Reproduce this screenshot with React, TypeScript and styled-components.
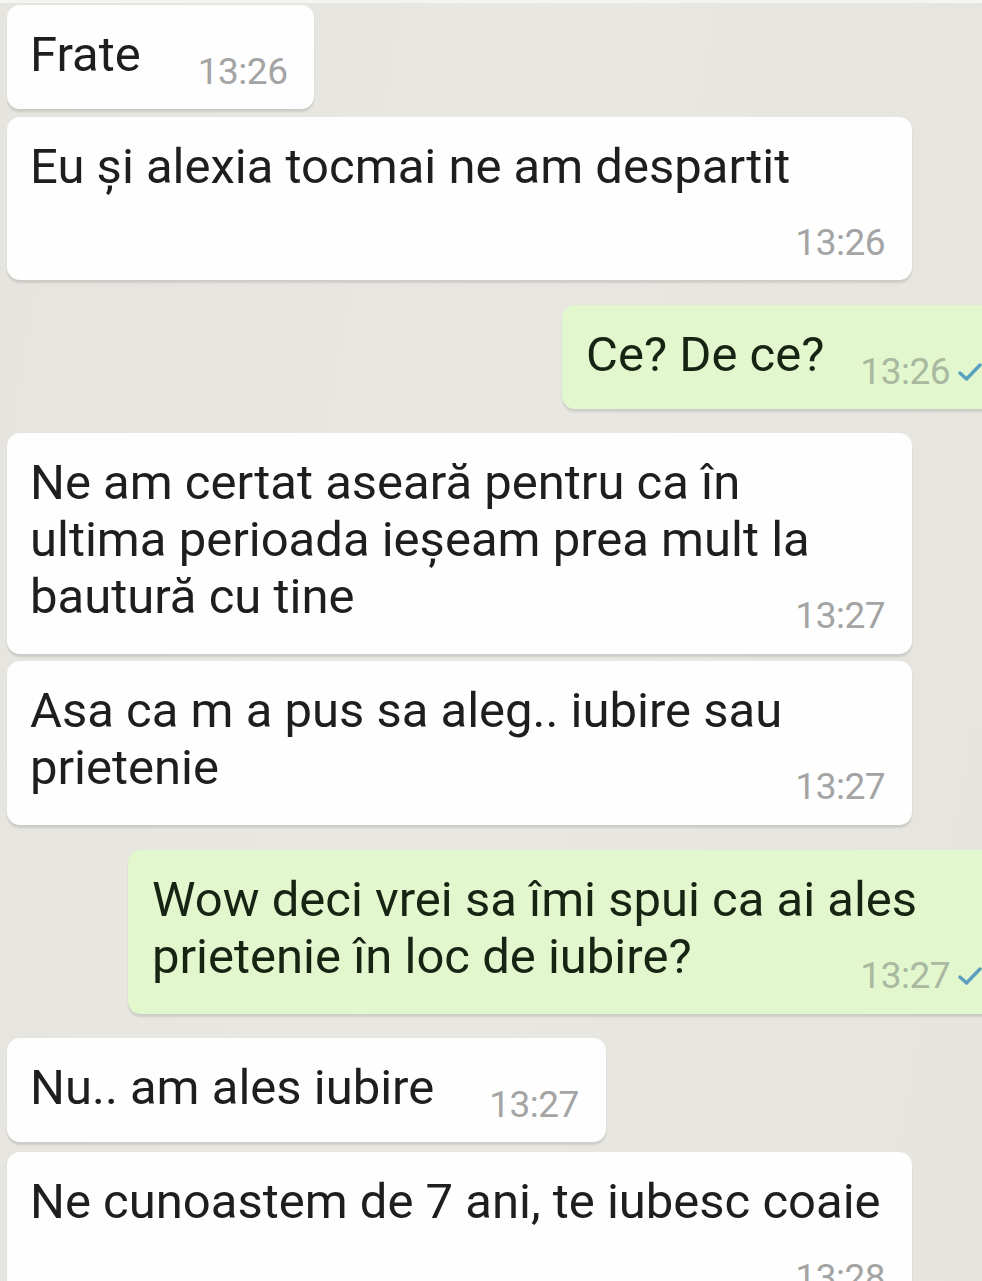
import React from 'react'
import styled, { createGlobalStyle } from 'styled-components'

const GlobalStyle = createGlobalStyle`
    html, body {
        margin: 0;
        padding: 0;
        background: #e7e5e0;
        overflow: hidden;
    }
`

const Page = styled.div`
    width: 982px;
    height: 1281px;
    overflow: hidden;
    background: linear-gradient(100deg, #e6e4df 0%, #e9e7e2 45%, #e6e4de 100%);
    border-top: 3px solid #f4f4f3;
    box-sizing: border-box;
`
const Chat = styled.div`
    width: 1000px;
    display: flex;
    flex-direction: column;
    padding: 2px 5px 0 7px;
    box-sizing: border-box;
    font-family: Roboto, 'Noto Sans', sans-serif;
`
type Layout = 'row' | 'wrap' | 'stack'

const Bubble = styled.div<{ $out?: boolean; $layout: Layout; $gap: number; $width?: number }>`
    align-self: ${p => (p.$out ? 'flex-end' : 'flex-start')};
    margin-top: ${p => p.$gap}px;
    display: flex;
    flex-direction: ${p => (p.$layout === 'row' ? 'row' : 'column')};
    align-items: flex-start;
    box-sizing: border-box;
    width: ${p => (p.$width ? `${p.$width}px` : 'auto')};
    padding: 21px ${p => (p.$out ? 13 : 27)}px ${p => (p.$layout === 'wrap' ? 20 : 19)}px ${p => (p.$out ? 24 : 23)}px;
    background: ${p => (p.$out ? '#e2f7ce' : '#fefefe')};
    border-radius: 13px;
    box-shadow: 0 3px 2px rgba(0, 0, 0, 0.11);
`
const Text = styled.div<{ $out?: boolean }>`
    font-size: 49px;
    line-height: 57px;
    color: ${p => (p.$out ? '#172413' : '#1e1e1e')};
`
const Meta = styled.div<{ $out?: boolean; $layout: Layout; $space?: number }>`
    display: flex;
    align-items: center;
    gap: 8px;
    align-self: ${p => (p.$layout === 'row' ? 'flex-start' : 'flex-end')};
    margin-left: ${p => (p.$layout === 'row' ? p.$space ?? 50 : 0)}px;
    margin-top: ${p => (p.$layout === 'row' ? 28 : p.$layout === 'wrap' ? -27 : 30)}px;
    font-size: 37px;
    line-height: 36px;
    letter-spacing: -0.5px;
    color: ${p => (p.$out ? '#a9b89f' : '#a4a4a4')};
`
const Tick = styled.svg`
    width: 24px;
    height: 20px;
    flex-shrink: 0;
`

interface Message {
    text: string
    time: string
    out?: boolean
    layout: Layout
    gap: number
    width?: number
    space?: number
}

const messages: Message[] = [
    { text: 'Frate', time: '13:26', layout: 'row', gap: 0, space: 57 },
    { text: 'Eu și alexia tocmai ne am despartit', time: '13:26', layout: 'stack', gap: 8, width: 905 },
    { text: 'Ce? De ce?', time: '13:26', out: true, layout: 'row', gap: 25, space: 36 },
    { text: 'Ne am certat aseară pentru ca în ultima perioada ieșeam prea mult la bautură cu tine', time: '13:27', layout: 'wrap', gap: 24, width: 905 },
    { text: 'Asa ca m a pus sa aleg.. iubire sau prietenie', time: '13:27', layout: 'wrap', gap: 7, width: 905 },
    { text: 'Wow deci vrei sa îmi spui ca ai ales prietenie în loc de iubire?', time: '13:27', out: true, layout: 'wrap', gap: 25, width: 867 },
    { text: 'Nu.. am ales iubire', time: '13:27', layout: 'row', gap: 24, space: 55 },
    { text: 'Ne cunoastem de 7 ani, te iubesc coaie', time: '13:28', layout: 'stack', gap: 10, width: 905 },
]

const App: React.FC = () => {
    return (
        <Page>
            <GlobalStyle />
            <Chat>
                {messages.map((m, index) => (
                    <Bubble key={index} $out={m.out} $layout={m.layout} $gap={m.gap} $width={m.width}>
                        <Text $out={m.out}>{m.text}</Text>
                        <Meta $out={m.out} $layout={m.layout} $space={m.space}>
                            <span>{m.time}</span>
                            {m.out && (
                                <Tick viewBox="0 0 24 20">
                                    <path d="M2 11 L8.5 17 L22 3" fill="none" stroke="#5a9fbd" strokeWidth="3.4" strokeLinecap="round" strokeLinejoin="round" />
                                </Tick>
                            )}
                        </Meta>
                    </Bubble>
                ))}
            </Chat>
        </Page>
    )
}

export default App
